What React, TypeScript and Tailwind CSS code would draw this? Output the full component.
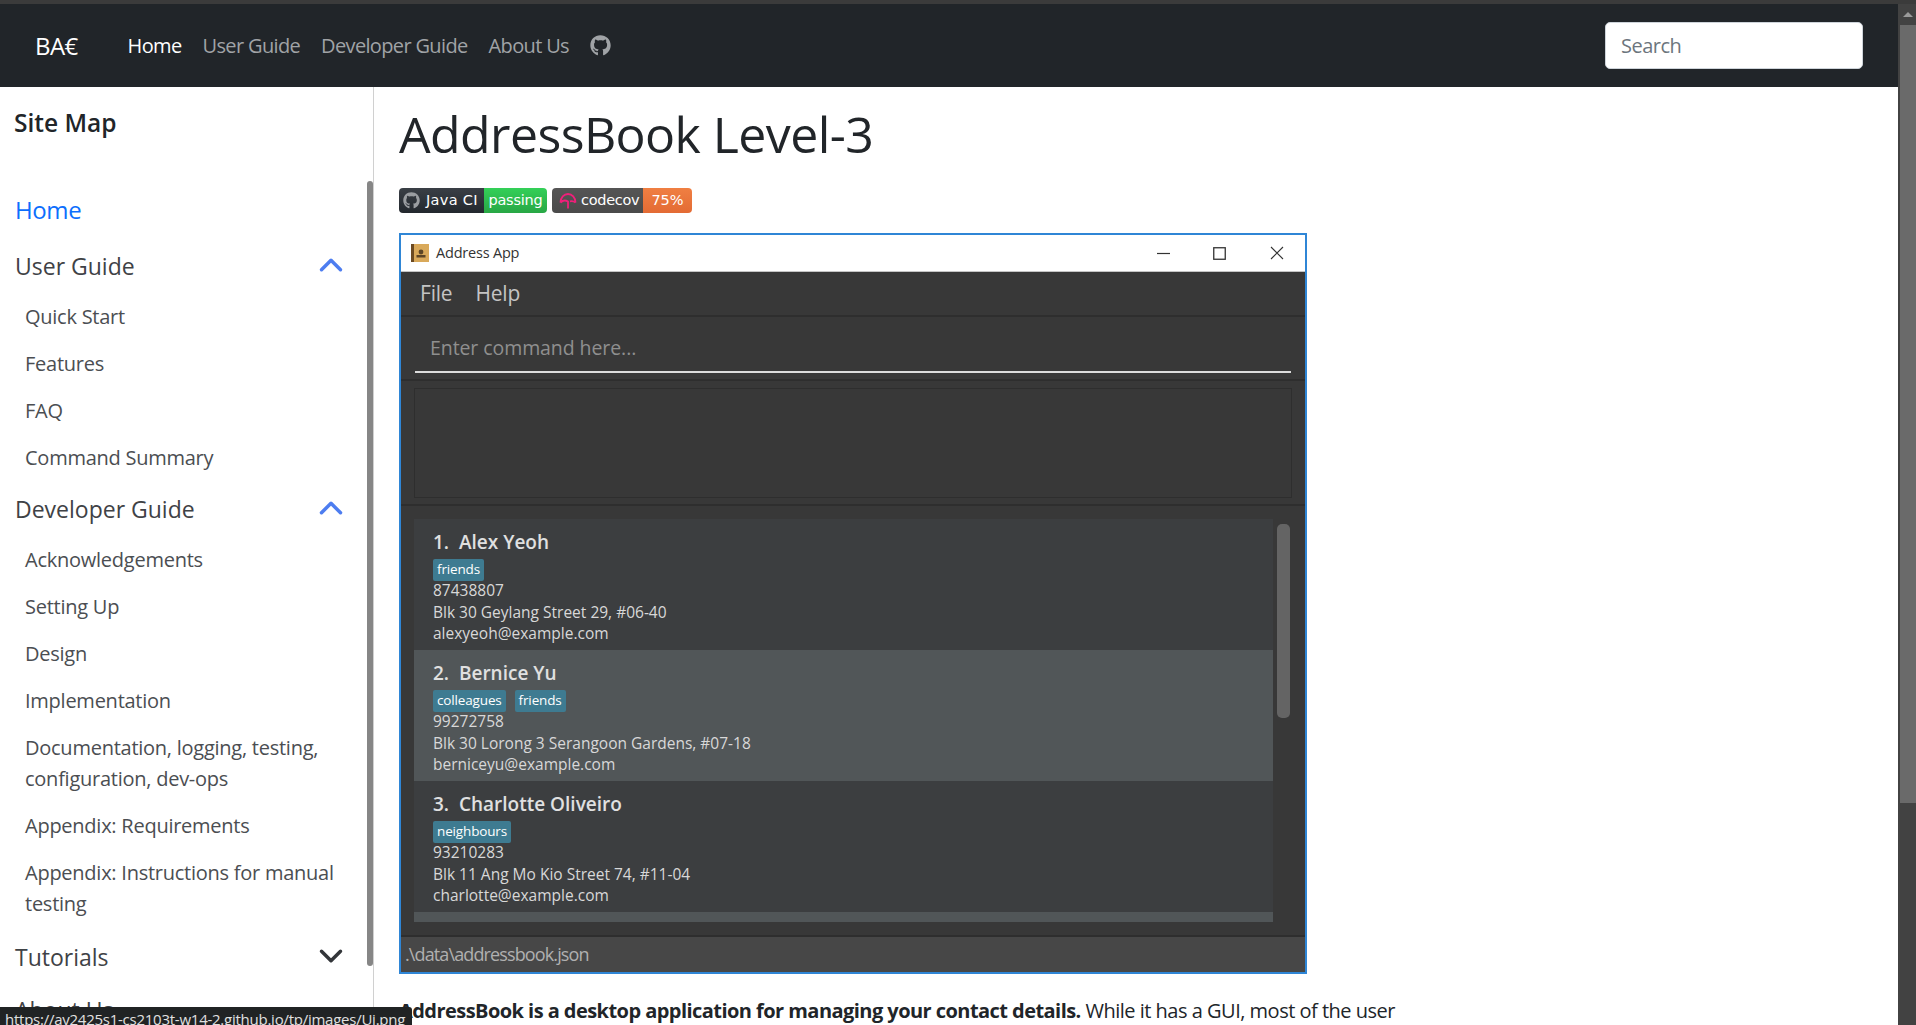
import React from 'react';
import { FaGithub } from 'react-icons/fa';
import { ChevronUp, ChevronDown } from 'lucide-react';

const people = [
  { name: '1.  Alex Yeoh', tags: ['friends'], phone: '87438807', address: 'Blk 30 Geylang Street 29, #06-40', email: 'alexyeoh@example.com', bg: 'bg-[#3c3e40]' },
  { name: '2.  Bernice Yu', tags: ['colleagues', 'friends'], phone: '99272758', address: 'Blk 30 Lorong 3 Serangoon Gardens, #07-18', email: 'berniceyu@example.com', bg: 'bg-[#515658]' },
  { name: '3.  Charlotte Oliveiro', tags: ['neighbours'], phone: '93210283', address: 'Blk 11 Ang Mo Kio Street 74, #11-04', email: 'charlotte@example.com', bg: 'bg-[#3c3e40]' },
];

const Section = ({ title, open, items }: { title: string; open: boolean; items: string[] }) => (
  <div>
    <div className="flex items-center justify-between h-[45px] pr-[23px]">
      <span className="text-[23px] text-[#3f4246]">{title}</span>
      {open ? (
        <ChevronUp size={38} strokeWidth={2.2} className="text-[#4d7df0] -mt-[3px]" />
      ) : (
        <ChevronDown size={38} strokeWidth={2.2} className="text-[#33363a] -mt-[3px]" />
      )}
    </div>
    {items.length > 0 && (
      <ul className="pl-2.5 pr-6 pt-[4px] pb-[6px]">
        {items.map((item) => (
          <li key={item} className="text-[20px] leading-[31px] py-[8px] text-[#4b4e52] tracking-[-0.25px]">
            {item}
          </li>
        ))}
      </ul>
    )}
  </div>
);

const PersonCard = ({ p }: { p: (typeof people)[number] }) => (
  <div className={`${p.bg} h-[131px] pl-[19px] pt-[10px] text-[#d8d8d8]`}>
    <div className="text-[19px] leading-[26px] font-semibold whitespace-pre text-[#e0e0e0]">{p.name}</div>
    <div className="flex gap-[9px] mt-[4px]">
      {p.tags.map((tag) => (
        <span key={tag} className="bg-[#3e7b91] text-white rounded-[2px] h-[22px] px-1 text-[13.5px] leading-[21px] tracking-[-0.15px]">
          {tag}
        </span>
      ))}
    </div>
    <div className="text-[15.5px] leading-[21.5px] mt-[-1px]">
      <div>{p.phone}</div>
      <div>{p.address}</div>
      <div>{p.email}</div>
    </div>
  </div>
);

const AddressApp = () => (
  <div className="w-[908px] h-[741px] border-2 border-[#2f86d6] bg-[#383838] flex flex-col overflow-hidden">
    {/* title bar */}
    <div className="h-[37px] bg-white border-b border-[#c4c4c4] flex items-center pl-[10px] shrink-0">
      <svg width="18" height="18" viewBox="0 0 18 18">
        <rect x="0" y="0" width="18" height="18" fill="#d9a95a" />
        <rect x="0" y="0" width="3" height="18" fill="#6b4a22" />
        <circle cx="10" cy="8" r="2.4" fill="#5c4526" />
        <rect x="5.5" y="11" width="9" height="2.5" fill="#5c4526" />
      </svg>
      <span className="ml-[7px] text-[14.5px] text-[#333] tracking-[-0.2px]">Address App</span>
      <div className="ml-auto flex items-center pr-[21px] gap-[44px]">
        <svg width="13" height="13" viewBox="0 0 13 13" className="mr-[-1px]">
          <path d="M0 6.5h13" stroke="#333" strokeWidth="1.2" />
        </svg>
        <svg width="13" height="13" viewBox="0 0 13 13">
          <rect x="0.75" y="0.75" width="11.5" height="11.5" fill="none" stroke="#333" strokeWidth="1.3" />
        </svg>
        <svg width="14" height="14" viewBox="0 0 14 14">
          <path d="M1 1l12 12M13 1L1 13" stroke="#333" strokeWidth="1.1" />
        </svg>
      </div>
    </div>
    {/* menu bar */}
    <div className="h-[45px] border-b-2 border-[#2e2e2e] flex items-center gap-[23px] pl-[19px] text-[21px] text-[#c4c4c4] shrink-0 tracking-[-0.2px]">
      <span>File</span>
      <span>Help</span>
    </div>
    {/* command box */}
    <div className="h-[64px] border-b-2 border-[#2e2e2e] px-[14px] shrink-0">
      <div className="h-[56px] border-b-2 border-[#dcdcdc] pl-[15px] pt-[17px] text-[19.5px] leading-[28px] text-[#8f8f8f] tracking-[-0.08px]">
        Enter command here...
      </div>
    </div>
    {/* result display */}
    <div className="h-[125px] border-b-2 border-[#2e2e2e] px-[13px] pt-[7px] shrink-0">
      <div className="h-[110px] border border-[#2e2e2e]" />
    </div>
    {/* person list */}
    <div className="flex-1 relative pl-[13px] pr-[32px] pt-[13px] overflow-hidden">
      {people.map((p) => (
        <PersonCard key={p.name} p={p} />
      ))}
      <div className="h-[10px] bg-[#515658]" />
      <div className="absolute right-[15px] top-[18px] w-[13px] h-[194px] rounded-[5px] bg-[#646464]" />
    </div>
    {/* status bar */}
    <div className="h-[37px] bg-[#474747] border-t-2 border-[#2e2e2e] pl-[4px] text-[18px] leading-[34px] text-[#b0b0b0] shrink-0 tracking-[-0.88px]">
      .\data\addressbook.json
    </div>
  </div>
);

export default function App() {
  return (
    <div className="h-[1025px] overflow-hidden flex flex-col bg-white relative font-['Open_Sans',sans-serif] text-[#212529]">
      <div className="h-1 bg-[#3b3b3b] shrink-0" />
      <div className="flex flex-1 min-h-0">
        <div className="flex-1 min-w-0 flex flex-col">
          {/* navbar */}
          <nav className="h-[83px] bg-[#212529] flex items-center pl-[35px] pr-[35px] shrink-0">
            <span className="text-[24px] text-white tracking-[-0.6px] mr-[50px]">BA€</span>
            <div className="flex items-center gap-[21px] text-[20px] tracking-[-0.65px] text-[#a0a3a6]">
              <span className="text-white">Home</span>
              <span>User Guide</span>
              <span>Developer Guide</span>
              <span>About Us</span>
              <FaGithub size={21} className="text-[#a0a3a6]" />
            </div>
            <div className="ml-auto w-[258px] h-[47px] bg-white rounded-[5px] border border-[#ced4da] flex items-center pl-[15px] text-[20px] text-[#6c757d] tracking-[-0.5px]">
              Search
            </div>
          </nav>
          <div className="flex flex-1 min-h-0">
            {/* site nav */}
            <aside className="w-[374px] shrink-0 border-r border-[#d0d0d0] relative overflow-hidden pl-[15px]">
              <h2 className="text-[24.5px] font-semibold pt-[19px] pb-[53px] leading-[34px] -ml-[1px]">Site Map</h2>
              <div className="text-[24px] leading-[34px] text-[#0d6efd] pb-[17px] tracking-[-0.4px]">Home</div>
              <Section title="User Guide" open items={['Quick Start', 'Features', 'FAQ', 'Command Summary']} />
              <Section
                title="Developer Guide"
                open
                items={[
                  'Acknowledgements',
                  'Setting Up',
                  'Design',
                  'Implementation',
                  'Documentation, logging, testing, configuration, dev-ops',
                  'Appendix: Requirements',
                  'Appendix: Instructions for manual testing',
                ]}
              />
              <div className="mt-[2px]">
                <Section title="Tutorials" open={false} items={[]} />
              </div>
              <div className="text-[23px] text-[#3f4246] pt-[13px]">About Us</div>
              <div className="absolute right-0 top-[94px] w-[6px] h-[785px] rounded-t-[3px] rounded-b-[3px] bg-[#868686]" />
            </aside>
            {/* page content */}
            <main className="flex-1 min-w-0 pl-[25px] overflow-hidden">
              <h1 className="text-[50px] leading-[60px] mt-[17px] font-medium tracking-[-0.58px]">AddressBook Level-3</h1>
              <div className="flex gap-[5px] mt-[24px]">
                <div className="flex h-[25px] rounded-[4px] overflow-hidden font-['DejaVu_Sans',sans-serif] text-[14.5px] leading-[25px] text-white">
                  <div className="w-[85px] bg-gradient-to-b from-[#3a3f46] to-[#23282e] flex items-center pl-[4px] gap-[6px] whitespace-nowrap tracking-[0.3px]">
                    <FaGithub size={17} className="text-[#9a9da1] shrink-0" />
                    <span>Java CI</span>
                  </div>
                  <div className="w-[63px] bg-gradient-to-b from-[#34d058] to-[#28a745] text-center tracking-[-0.2px]">passing</div>
                </div>
                <div className="flex h-[25px] rounded-[4px] overflow-hidden font-['DejaVu_Sans',sans-serif] text-[14.5px] leading-[25px] text-white">
                  <div className="w-[91px] bg-gradient-to-b from-[#555] to-[#4a4a4a] flex items-center pl-[7px] gap-[4px] tracking-[-0.3px]">
                    <svg width="18" height="18" viewBox="0 0 18 18" fill="none" stroke="#f01f7a" strokeWidth="1.8" className="shrink-0">
                      <path d="M1.5 10.5C1.5 5.5 5 2 9 2s7.5 3.5 7.5 8.5" />
                      <path d="M1.5 10.5c2-2 5-2.5 7.5-1v7" />
                      <path d="M16.5 10.5c-1.5-1.2-3.5-1.6-5.5-1.2" />
                    </svg>
                    <span>codecov</span>
                  </div>
                  <div className="w-[49px] bg-gradient-to-b from-[#f07f42] to-[#e36b34] text-center">75%</div>
                </div>
              </div>
              <div className="mt-[20px]">
                <AddressApp />
              </div>
              <p className="mt-[22px] text-[20px] leading-[30px] tracking-[-0.5px]">
                <strong className="tracking-[-0.55px]">AddressBook is a desktop application for managing your contact details.</strong> While it has a GUI, most of the user
              </p>
            </main>
          </div>
        </div>
        {/* page scrollbar */}
        <div className="w-[18px] shrink-0 bg-[#424242] flex flex-col pl-[2px]">
          <div className="h-[21px] flex items-center justify-center">
            <div className="w-0 h-0 border-x-[5px] border-x-transparent border-b-[5px] border-b-[#9a9a9a]" />
          </div>
          <div className="h-[778px] bg-[#6a6a6a]" />
        </div>
      </div>
      {/* link status tooltip */}
      <div className="absolute left-0 bottom-0 w-[412px] h-[18px] bg-[#202324] rounded-tr-[3px] pl-[5px] text-[15px] leading-[24px] text-[#e0e0e0] overflow-hidden whitespace-nowrap tracking-[-0.25px]">
        https://ay2425s1-cs2103t-w14-2.github.io/tp/images/Ui.png
      </div>
    </div>
  );
}
